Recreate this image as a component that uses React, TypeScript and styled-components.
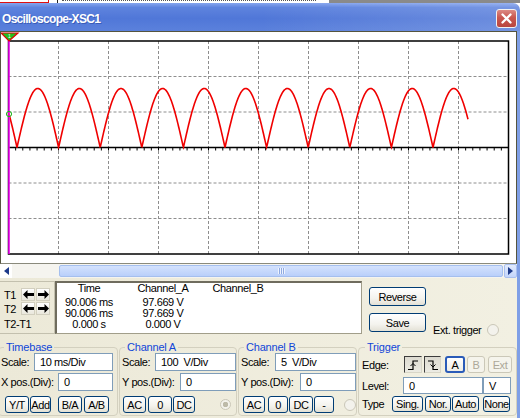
import styled, { createGlobalStyle } from "styled-components";

const GlobalStyle = createGlobalStyle`
  html, body { margin: 0; padding: 0; }
  body {
    background: #ffffff;
    font-family: "Liberation Sans", Arial, sans-serif;
    font-size: 11px;
    letter-spacing: -0.4px;
    color: #000;
  }
`;

// plot geometry (svg coords, svg starts at x=1,y=32 of the page)
const X0 = 7.5;
const X1 = 507.5;
const Y0 = 9;
const Y1 = 222;
const AXIS = (Y0 + Y1) / 2;
const DIV_Y = (Y1 - Y0) / 6;

const wavePath = () => {
  const pts: string[] = [];
  for (let x = X0; x <= 467; x += 0.5) {
    const y = AXIS - 59 * Math.abs(Math.sin((Math.PI * (x - 16)) / 41.6));
    pts.push(`${x.toFixed(1)},${y.toFixed(1)}`);
  }
  return "M" + pts.join(" L");
};

const ticks = () => {
  const out: number[] = [];
  for (let x = X0; x <= X1; x += 50 / 7) out.push(x);
  return out;
};

const Scope = () => (
  <svg width="515" height="231" viewBox="0 0 515 231">
    {[1, 2, 3, 4, 5, 6, 7, 8, 9].map((k) => (
      <line key={"v" + k} x1={X0 + 50 * k} y1={Y0} x2={X0 + 50 * k} y2={Y1}
        stroke="#8e8e8e" strokeDasharray="3 2" />
    ))}
    {[1, 2, 4, 5].map((k) => (
      <line key={"h" + k} x1={X0} y1={Y0 + DIV_Y * k} x2={X1} y2={Y0 + DIV_Y * k}
        stroke="#8e8e8e" strokeDasharray="3 2" />
    ))}
    <line x1={X0} y1={AXIS} x2={X1} y2={AXIS} stroke="#000" strokeWidth="1.5" />
    {ticks().map((x, i) => (
      <line key={"t" + i} x1={x} y1={AXIS} x2={x} y2={AXIS + 3} stroke="#000" />
    ))}
    <rect x={X0} y={Y0} width={X1 - X0} height={Y1 - Y0} fill="none" stroke="#000" strokeWidth="1.5" />
    <path d={wavePath()} fill="none" stroke="#f00000" strokeWidth="1.6" />
    <line x1={X0 + 0.5} y1="2" x2={X0 + 0.5} y2={Y1} stroke="#ff00ff" strokeWidth="1.5" />
    <circle cx={X0 + 0.5} cy="82" r="2.6" fill="none" stroke="#18b818" strokeWidth="1" />
    <polygon points="0,1 17,1 8,9" fill="#20c020" stroke="#e00000" strokeWidth="1.2" />
    <text x="7" y="6" fontSize="5" fill="#fff" fontFamily="Liberation Sans, sans-serif">1</text>
  </svg>
);

const LeftArrow = () => (
  <svg width="11" height="9" viewBox="0 0 11 9">
    <path d="M0 4.5 L4.5 0 V3 H11 V6 H4.5 V9 Z" fill="#000" />
  </svg>
);

const RightArrow = () => (
  <svg width="11" height="9" viewBox="0 0 11 9">
    <path d="M11 4.5 L6.5 0 V3 H0 V6 H6.5 V9 Z" fill="#000" />
  </svg>
);

const EdgeIcon = ({ falling }: { falling?: boolean }) => (
  <svg width="12" height="12" viewBox="0 0 12 12">
    <path d={falling ? "M1 2 H6 V10.5 H11" : "M1 10.5 H6 V2 H11"} fill="none" stroke="#000" strokeWidth="1.2" />
    <path d={falling ? "M3.5 5.5 L6 8 L8.5 5.5" : "M3.5 7 L6 4.5 L8.5 7"} fill="none" stroke="#000" strokeWidth="1" />
  </svg>
);

const CloseIcon = () => (
  <svg width="11" height="11" viewBox="0 0 11 11">
    <path d="M1.5 1.5 L9.5 9.5 M9.5 1.5 L1.5 9.5" stroke="#fff" strokeWidth="2.3" strokeLinecap="round" />
  </svg>
);

const ScrollArrow = ({ right }: { right?: boolean }) => (
  <svg width="5" height="8" viewBox="0 0 5 8">
    <polygon points={right ? "0,0 5,4 0,8" : "5,0 0,4 5,8"} fill="#1d3a8a" />
  </svg>
);

const cursorRows = [
  ["90.006 ms", "97.669 V", ""],
  ["90.006 ms", "97.669 V", ""],
  ["0.000 s", "0.000 V", ""],
];

export default function App() {
  return (
    <Page>
      <GlobalStyle />
      <TopStrip>
        <RedMark />
        <DarkTick />
        <Dotted />
        <GrayBack />
      </TopStrip>
      <TitleBar>
        <TitleText>Oscilloscope-XSC1</TitleText>
        <CloseButton>
          <CloseIcon />
        </CloseButton>
      </TitleBar>
      <Body>
        <Screen>
          <Scope />
        </Screen>
        <ScrollBar>
          <ScrollLeft>
            <ScrollArrow />
          </ScrollLeft>
          <Track>
            <Thumb>
              <Grip />
            </Thumb>
          </Track>
          <ScrollRight>
            <ScrollArrow right />
          </ScrollRight>
        </ScrollBar>

        <Controls>
          <CursorRow>
            <TPanel>
              <TLabel>T1</TLabel>
              <ArrowPair>
                <ArrowBtn><LeftArrow /></ArrowBtn>
                <ArrowBtn><RightArrow /></ArrowBtn>
              </ArrowPair>
              <TLabel>T2</TLabel>
              <ArrowPair>
                <ArrowBtn><LeftArrow /></ArrowBtn>
                <ArrowBtn><RightArrow /></ArrowBtn>
              </ArrowPair>
              <TDiff>T2-T1</TDiff>
            </TPanel>
            <DataBox>
              <DataHead>
                <Cell>Time</Cell>
                <Cell>Channel_A</Cell>
                <Cell>Channel_B</Cell>
              </DataHead>
              {cursorRows.map((r, i) => (
                <DataLine key={i}>
                  {r.map((c, j) => (
                    <Cell key={j}>{c}</Cell>
                  ))}
                </DataLine>
              ))}
            </DataBox>
            <ButtonCol>
              <BigButton>Reverse</BigButton>
              <BigButton>Save</BigButton>
            </ButtonCol>
            <ExtTrigger>
              Ext. trigger
              <Radio $size={12} />
            </ExtTrigger>
          </CursorRow>

          <Groups>
            <Group $w={120} $pl={2} $pr={4}>
              <Legend>Timebase</Legend>
              <Stack>
                <Row>
                  <span>Scale:</span>
                  <Field $w={79}>10 ms/Div</Field>
                </Row>
                <Row $mt={2}>
                  <span>X pos.(Div):</span>
                  <Field $w={55}>0</Field>
                </Row>
                <Row $mt={5} $h={17} $start>
                  <Btn $w={24} $ml={4}>Y/T</Btn>
                  <Btn $w={21} $ml={1}>Add</Btn>
                  <Btn $w={24} $ml={7}>B/A</Btn>
                  <Btn $w={25} $ml={2}>A/B</Btn>
                </Row>
              </Stack>
            </Group>

            <Group $w={118} $pl={2} $pr={0}>
              <Legend>Channel A</Legend>
              <Stack>
                <Row>
                  <span>Scale:</span>
                  <Field $w={81}>100&nbsp; V/Div</Field>
                </Row>
                <Row $mt={2}>
                  <span>Y pos.(Div):</span>
                  <Field $w={56}>0</Field>
                </Row>
                <Row $mt={5} $h={17} $start>
                  <Btn $w={23} $ml={1}>AC</Btn>
                  <Btn $w={24} $ml={2}>0</Btn>
                  <Btn $w={22} $ml={1}>DC</Btn>
                  <Radio $size={11} $ml={25} $checked />
                </Row>
              </Stack>
            </Group>

            <Group $w={119} $pl={2} $pr={0}>
              <Legend>Channel B</Legend>
              <Stack>
                <Row>
                  <span>Scale:</span>
                  <Field $w={81}>5&nbsp; V/Div</Field>
                </Row>
                <Row $mt={2}>
                  <span>Y pos.(Div):</span>
                  <Field $w={56}>0</Field>
                </Row>
                <Row $mt={5} $h={17} $start>
                  <Btn $w={22} $ml={2}>AC</Btn>
                  <Btn $w={20} $ml={3}>0</Btn>
                  <Btn $w={24} $ml={1}>DC</Btn>
                  <Btn $w={20} $ml={1}>-</Btn>
                  <Radio $size={12} $ml={10} />
                </Row>
              </Stack>
            </Group>

            <Group $w={159} $pl={3} $pr={5}>
              <Legend>Trigger</Legend>
              <Stack $pt={3}>
                <Row $h={17} $start>
                  <Label $w={42}>Edge:</Label>
                  <Btn $w={18} $variant="pressed"><EdgeIcon /></Btn>
                  <Btn $w={17} $ml={2} $variant="pressed"><EdgeIcon falling /></Btn>
                  <Btn $w={20} $ml={4} $variant="selected">A</Btn>
                  <Btn $w={18} $ml={2} $variant="disabled">B</Btn>
                  <Btn $w={24} $ml={3} $variant="disabled">Ext</Btn>
                </Row>
                <Row $h={17} $mt={4} $start>
                  <Label $w={41}>Level:</Label>
                  <Field $w={80}>0</Field>
                  <Field $w={28}>V</Field>
                </Row>
                <Row $h={16} $mt={2} $start>
                  <Label $w={30}>Type</Label>
                  <Btn $w={31}>Sing.</Btn>
                  <Btn $w={26} $ml={2}>Nor.</Btn>
                  <Btn $w={27} $ml={1}>Auto</Btn>
                  <Btn $w={27} $ml={4}>None</Btn>
                </Row>
              </Stack>
            </Group>
          </Groups>
        </Controls>
      </Body>
    </Page>
  );
}

const Page = styled.div`
  width: 520px;
  height: 418px;
  overflow: hidden;
  display: flex;
  flex-direction: column;
  background: #fff;
`;

const TopStrip = styled.div`
  height: 3px;
  display: flex;
  background: #fff;
`;

const RedMark = styled.div`
  width: 49px;
  height: 3px;
  box-sizing: border-box;
  border-bottom: 1px solid #e01010;
  border-right: 1px solid #e01010;
`;

const DarkTick = styled.div`
  width: 1px;
  margin-left: 8px;
  background: #222;
`;

const Dotted = styled.div`
  width: 254px;
  margin-left: 4px;
  border-top: 1px dotted #555;
`;

const GrayBack = styled.div`
  flex: 1;
  margin-left: 13px;
  background: #8a8a8a;
`;

const TitleBar = styled.div`
  height: 28px;
  display: flex;
  align-items: center;
  justify-content: space-between;
  padding: 0 3px 0 2px;
  border-top-right-radius: 7px;
  background: linear-gradient(90deg, rgba(255, 255, 255, 0) 0%, rgba(255, 255, 255, 0) 50%, rgba(255, 255, 255, 0.16) 100%),
    linear-gradient(180deg, #86a5ee 0%, #5e83de 16%, #5077d8 55%, #5b81dc 100%);
`;

const TitleText = styled.span`
  margin-top: 4px;
  color: #fff;
  font-weight: bold;
  font-size: 12px;
  letter-spacing: -0.7px;
  text-shadow: 1px 1px 0 #3a5cb8;
`;

const CloseButton = styled.div`
  width: 19px;
  height: 17px;
  margin-top: 3px;
  display: flex;
  align-items: center;
  justify-content: center;
  border: 1px solid #f2f2f2;
  border-radius: 3px;
  background: linear-gradient(180deg, #dc8a84 0%, #c9574f 45%, #b9463f 100%);
`;

const Body = styled.div`
  flex: 1;
  display: flex;
  flex-direction: column;
  border-right: 3px solid #7f9fe6;
  background: linear-gradient(90deg, #ece9d8 0%, #f2f0e2 100%);
`;

const Screen = styled.div`
  height: 233px;
  box-sizing: border-box;
  border: 1px solid #55553f;
  border-bottom-color: #8a8a7c;
  background: #fff;
  line-height: 0;
`;

const ScrollBar = styled.div`
  height: 14px;
  display: flex;
  background: #f5f4ef;
`;

const ScrollLeft = styled.div`
  width: 12px;
  display: flex;
  align-items: center;
  justify-content: center;
  background: #fff;
`;

const ScrollRight = styled.div`
  width: 13px;
  box-sizing: border-box;
  display: flex;
  align-items: center;
  justify-content: center;
  border: 1px solid #a9c0ef;
  border-radius: 2px;
  background: linear-gradient(180deg, #e2ebfd 0%, #c3d5fb 100%);
`;

const Track = styled.div`
  flex: 1;
  display: flex;
  padding: 1px 1px 1px 47px;
`;

const Thumb = styled.div`
  flex: 1;
  display: flex;
  align-items: center;
  justify-content: center;
  border: 1px solid #a5bfee;
  border-radius: 2px;
  background: linear-gradient(180deg, #d4e2fd 0%, #b9cffa 100%);
`;

const Grip = styled.div`
  width: 7px;
  height: 6px;
  background: repeating-linear-gradient(90deg, #eef3fe 0 1px, #8faae0 1px 2px);
`;

const Controls = styled.div`
  flex: 1;
  display: flex;
  flex-direction: column;
  padding-top: 3px;
`;

const CursorRow = styled.div`
  height: 53px;
  display: flex;
`;

const TPanel = styled.div`
  width: 55px;
  box-sizing: border-box;
  border: 1px solid #c3c0ae;
  border-left: none;
  display: grid;
  grid-template-columns: 20px 30px;
  grid-template-rows: 14px 13px 1fr;
  row-gap: 0;
  padding-top: 6px;
  padding-left: 1px;
`;

const TLabel = styled.span`
  align-self: center;
  padding-left: 3px;
`;

const TDiff = styled.span`
  grid-column: 1 / 3;
  align-self: center;
  padding-left: 3px;
`;

const ArrowPair = styled.div`
  display: flex;
  gap: 1px;
`;

const ArrowBtn = styled.div`
  width: 14px;
  height: 13px;
  box-sizing: border-box;
  display: flex;
  align-items: center;
  justify-content: center;
  border: 1px solid #d2cfbf;
  background: linear-gradient(180deg, #ffffff 0%, #e9e7dc 100%);
`;

const DataBox = styled.div`
  width: 307px;
  box-sizing: border-box;
  border: 1px solid #a19e8a;
  border-top: 2px solid #6f6c5e;
  border-left: 2px solid #6f6c5e;
  background: #fff;
  padding-top: 0;
`;

const DataHead = styled.div`
  display: grid;
  grid-template-columns: 64px 84px 66px;
  height: 13px;
  line-height: 11px;
  margin-bottom: 1px;
`;

const DataLine = styled.div`
  display: grid;
  grid-template-columns: 64px 84px 66px;
  line-height: 11px;
`;

const Cell = styled.span`
  text-align: center;
  white-space: nowrap;
`;

const ButtonCol = styled.div`
  width: 57px;
  margin-left: 7px;
  padding-top: 6px;
  display: flex;
  flex-direction: column;
  gap: 7px;
`;

const BigButton = styled.div`
  height: 19px;
  box-sizing: border-box;
  display: flex;
  align-items: center;
  justify-content: center;
  border: 1px solid #003c74;
  border-radius: 3px;
  background: linear-gradient(180deg, #ffffff 0%, #f4f3ee 60%, #e3e1d6 100%);
`;

const ExtTrigger = styled.div`
  align-self: flex-end;
  margin-left: 7px;
  margin-bottom: -2px;
  display: flex;
  align-items: center;
  gap: 6px;
`;

const Radio = styled.div<{ $size: number; $ml?: number; $checked?: boolean }>`
  width: ${(p) => p.$size}px;
  height: ${(p) => p.$size}px;
  margin-left: ${(p) => p.$ml ?? 0}px;
  box-sizing: border-box;
  border-radius: 50%;
  border: 1px solid #cac7b8;
  background: ${(p) =>
    p.$checked
      ? "radial-gradient(circle, #bdbaa9 0 2.5px, #f3f2ec 3px)"
      : "#f3f2ec"};
`;

const Groups = styled.div`
  display: flex;
  gap: 1px;
  margin-left: -2px;
  margin-top: 8px;
`;

const Group = styled.fieldset<{ $w: number; $pl: number; $pr: number }>`
  box-sizing: border-box;
  width: ${(p) => p.$w}px;
  min-width: 0;
  margin: 0;
  padding: 0 ${(p) => p.$pr}px 2px ${(p) => p.$pl}px;
  border: 1px solid #d3d0bf;
  border-radius: 4px;
`;

const Legend = styled.legend`
  margin-left: 3px;
  padding: 0 2px;
  line-height: 11px;
  color: #1046d8;
  letter-spacing: -0.2px;
`;

const Stack = styled.div<{ $pt?: number }>`
  display: flex;
  flex-direction: column;
  padding-top: ${(p) => p.$pt ?? 0}px;
`;

const Row = styled.div<{ $h?: number; $mt?: number; $start?: boolean }>`
  height: ${(p) => p.$h ?? 18}px;
  margin-top: ${(p) => p.$mt ?? 0}px;
  display: flex;
  align-items: center;
  justify-content: ${(p) => (p.$start ? "flex-start" : "space-between")};
  white-space: nowrap;
`;

const Label = styled.span<{ $w: number }>`
  width: ${(p) => p.$w}px;
  flex: none;
`;

const Field = styled.div<{ $w: number }>`
  width: ${(p) => p.$w}px;
  height: 100%;
  flex: none;
  box-sizing: border-box;
  display: flex;
  align-items: center;
  padding-left: 5px;
  border: 1px solid #7f9db9;
  background: #fff;
  white-space: nowrap;
`;

type BtnVariant = "normal" | "pressed" | "selected" | "disabled";

const btnBorder: Record<BtnVariant, string> = {
  normal: "1px solid #003c74",
  pressed: "1px solid #3c3c3c",
  selected: "2px solid #2a5bb8",
  disabled: "1px solid #cbc8b8",
};

const btnBg: Record<BtnVariant, string> = {
  normal: "linear-gradient(180deg, #ffffff 0%, #f3f2ec 60%, #e2e0d4 100%)",
  pressed: "linear-gradient(180deg, #dcdad0 0%, #ecebe3 100%)",
  selected: "linear-gradient(180deg, #ffffff 0%, #eeede6 100%)",
  disabled: "#f5f4ec",
};

const Btn = styled.div<{ $w: number; $ml?: number; $variant?: BtnVariant }>`
  width: ${(p) => p.$w}px;
  height: 100%;
  margin-left: ${(p) => p.$ml ?? 0}px;
  flex: none;
  box-sizing: border-box;
  display: flex;
  align-items: center;
  justify-content: center;
  border: ${(p) => btnBorder[p.$variant ?? "normal"]};
  border-radius: 3px;
  background: ${(p) => btnBg[p.$variant ?? "normal"]};
  color: ${(p) => (p.$variant === "disabled" ? "#aca899" : "#000")};
  ${(p) =>
    p.$variant === "pressed"
      ? "border-radius: 0; border-right-color: #d8d6c8; border-bottom-color: #d8d6c8;"
      : ""}
`;
